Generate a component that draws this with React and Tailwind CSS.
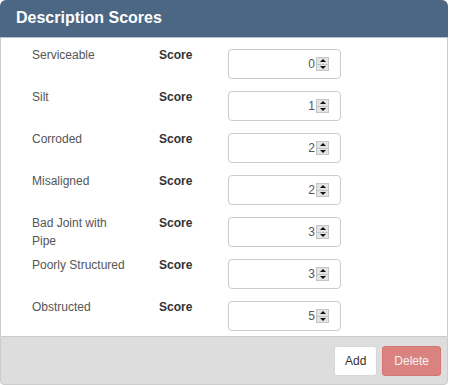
import React from "react";

const rows = [
  { label: "Serviceable", value: 0 },
  { label: "Silt", value: 1 },
  { label: "Corroded", value: 2 },
  { label: "Misaligned", value: 2 },
  { label: "Bad Joint with Pipe", value: 3 },
  { label: "Poorly Structured", value: 3 },
  { label: "Obstructed", value: 5 },
];

function Spinner() {
  return (
    <div className="flex h-[14px] w-[13px] flex-col border border-[#c4c4c4] bg-[#e4e4e4]">
      <div className="flex flex-1 items-center justify-center border-b border-[#c4c4c4]">
        <svg width="6" height="3" viewBox="0 0 6 3">
          <polygon points="0,3 6,3 3,0" fill="#111" />
        </svg>
      </div>
      <div className="flex flex-1 items-center justify-center">
        <svg width="6" height="3" viewBox="0 0 6 3">
          <polygon points="0,0 6,0 3,3" fill="#111" />
        </svg>
      </div>
    </div>
  );
}

export default function App() {
  return (
    <div
      className="h-[385px] w-[450px] bg-white"
      style={{ fontFamily: '"Liberation Sans", Arial, sans-serif' }}
    >
      <div className="flex w-[448px] flex-col">
        <div className="flex h-[38px] items-center rounded-t-[6px] border-b border-[#b3c0cd] bg-[#4c6784] pb-[1px] pl-4 text-[16px] font-bold text-white">
          Description Scores
        </div>
        <div className="flex flex-col gap-[8px] border-x border-[#cccccc] pb-[5px] pl-[31px] pt-[7px]">
          {rows.map((r) => (
            <div key={r.label} className="flex h-[34px] items-start text-[12px] leading-[18px]">
              <div className="w-[97px] pt-[1px] text-[#555555]">{r.label}</div>
              <div className="ml-[30px] w-[69px] pt-[1px] font-bold text-[#333333]">Score</div>
              <div className="mt-[4px] flex h-[30px] w-[113px] items-center justify-end gap-[1px] rounded-[4px] border border-[#cccccc] bg-white pr-[11px] text-[#555555]">
                <span>{r.value}</span>
                <Spinner />
              </div>
            </div>
          ))}
        </div>
        <div className="flex h-[49px] items-start justify-end gap-[5px] rounded-b-[4px] border border-[#cccccc] bg-[#dddddd] pr-[6px] pt-[9px]">
          <button className="rounded-[3px] border border-[#d8d8d8] bg-white px-[10px] py-[5px] text-[12px] leading-[18px] text-[#333333]">
            Add
          </button>
          <button className="rounded-[3px] border border-[#d43f3a] bg-[#d9534f] px-[11px] py-[5px] text-[12px] leading-[18px] text-white opacity-65">
            Delete
          </button>
        </div>
      </div>
    </div>
  );
}
